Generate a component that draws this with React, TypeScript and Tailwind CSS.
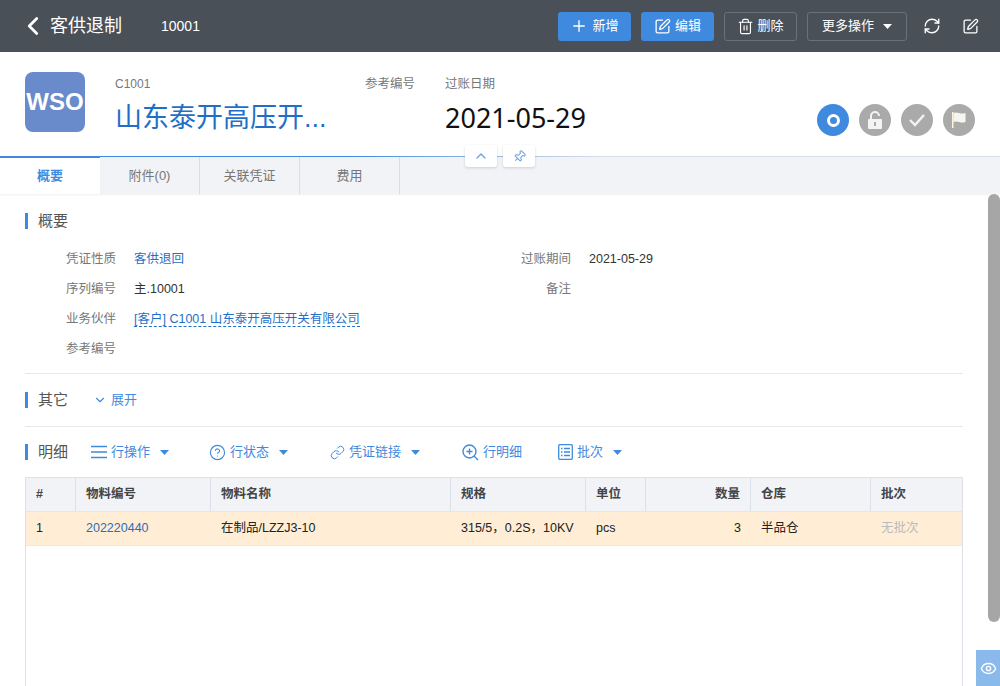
import { ChevronDown, ChevronLeft, ChevronUp, CircleHelp, Eye, Link, Pin, Plus, RefreshCw, Search, SquarePen, Trash2 } from "lucide-react";
import type { ReactNode } from "react";

const font = { fontFamily: '"Liberation Sans","Noto Sans CJK SC",sans-serif' };

function Caret({ className = "" }: { className?: string }) {
  return (
    <svg width="9" height="5" viewBox="0 0 9 5" className={className}>
      <path d="M0 0H9L4.5 5Z" fill="currentColor" />
    </svg>
  );
}

function Heading({ children }: { children: ReactNode }) {
  return <h2 className="border-l-[3px] border-[#3f8ade] pl-[10px] text-[15px] leading-[16px] text-[#555]">{children}</h2>;
}

function ToolAction({ icon, label, caret = true, className = "" }: { icon: ReactNode; label: string; caret?: boolean; className?: string }) {
  return (
    <span className={`flex items-center text-[13px] text-[#3f8ade] ${className}`}>
      {icon}
      <span className="ml-[4px]">{label}</span>
      {caret && <Caret className="ml-[10px]" />}
    </span>
  );
}

function Field({ label, children }: { label: string; children?: ReactNode }) {
  return (
    <div className="flex h-[30px] items-center text-[12.5px]">
      <span className="w-[91px] text-right text-[#777]">{label}</span>
      <span className="ml-[18px] text-[#333]">{children}</span>
    </div>
  );
}

export default function App() {
  return (
    <div className="relative h-[686px] w-[1000px] overflow-hidden bg-white" style={font}>
      <header className="flex h-[52px] items-center bg-[#4a5058] pl-[18px] text-white">
        <ChevronLeft size={30} strokeWidth={2.2} className="text-white" />
        <span className="ml-[2px] text-[18px]">客供退制</span>
        <span className="ml-[39px] text-[14px]">10001</span>
        <div className="ml-auto flex items-center pr-[21px] text-[13px]">
          <button className="flex h-[29px] w-[73px] items-center justify-center rounded-[3px] bg-[#3f8ade]">
            <Plus size={18} strokeWidth={1.8} /><span className="ml-[4px]">新增</span>
          </button>
          <button className="ml-[10px] flex h-[29px] w-[73px] items-center justify-center rounded-[3px] bg-[#3f8ade]">
            <SquarePen size={17} strokeWidth={1.8} /><span className="ml-[4px]">编辑</span>
          </button>
          <button className="ml-[10px] flex h-[29px] w-[73px] items-center justify-center rounded-[3px] border border-[#68717c]">
            <Trash2 size={17} strokeWidth={1.6} /><span className="ml-[3px]">删除</span>
          </button>
          <button className="ml-[10px] flex h-[29px] w-[100px] items-center justify-center rounded-[3px] border border-[#68717c]">
            <span>更多操作</span><Caret className="ml-[9px]" />
          </button>
          <RefreshCw size={18} strokeWidth={1.8} className="ml-[16px]" />
          <SquarePen size={17} strokeWidth={1.8} className="ml-[21px]" />
        </div>
      </header>

      <section className="flex h-[104px] bg-white pl-[25px] pt-[20px]">
        <div className="flex h-[60px] w-[60px] items-center justify-center rounded-[8px] bg-[#6a8bcb] text-[24px] font-bold text-white">WSO</div>
        <div className="ml-[30px] w-[250px]">
          <div className="text-[12px] leading-[24px] text-[#777]">C1001</div>
          <div className="mt-[2px] truncate text-[27px] leading-[40px] text-[#1f6fc9]">山东泰开高压开...</div>
        </div>
        <div className="text-[12.5px] leading-[24px] text-[#777]">参考编号</div>
        <div className="ml-[30px]">
          <div className="text-[12.5px] leading-[24px] text-[#777]">过账日期</div>
          <div className="mt-[2px] text-[27px] leading-[40px] text-[#111]" style={{ fontFamily: '"Noto Sans",sans-serif' }}>2021-05-29</div>
        </div>
        <div className="ml-auto flex gap-[10px] pr-[25px] pt-[32px]">
          <span className="flex h-[32px] w-[32px] items-center justify-center rounded-full bg-[#3f8ade]">
            <span className="h-[13px] w-[13px] rounded-full border-[3.5px] border-white" />
          </span>
          <span className="flex h-[32px] w-[32px] items-center justify-center rounded-full bg-[#aaa]">
            <svg width="16" height="19" viewBox="0 0 16 19"><path d="M4 8V5a4 4 0 0 1 8 0" fill="none" stroke="#f4f4f4" strokeWidth="2" /><rect x="1" y="8" width="14" height="10" rx="1" fill="#f4f4f4" /><rect x="7" y="11" width="2" height="4" fill="#aaa" /></svg>
          </span>
          <span className="flex h-[32px] w-[32px] items-center justify-center rounded-full bg-[#aaa]">
            <svg width="18" height="14" viewBox="0 0 18 14"><path d="M2 7l5 5L16 2" fill="none" stroke="#f4f4f4" strokeWidth="2.4" /></svg>
          </span>
          <span className="flex h-[32px] w-[32px] items-center justify-center rounded-full bg-[#aaa]">
            <svg width="16" height="18" viewBox="0 0 16 18"><path d="M1 1h1.500v16H1z" fill="#fdf3df" /><path d="M2.500 2c4-2 7 2 12 0v9c-5 2-8-2-12 0z" fill="#f8f5ee" /></svg>
          </span>
        </div>
      </section>

      <nav className="relative flex h-[38px] border-t border-[#d9dde8] bg-[#f2f3f7] text-[13px] text-[#777] shadow-[0_1px_2px_rgba(0,0,0,0.06)]">
        <span className="-mt-px flex w-[100px] items-center justify-center border-t-2 border-[#3f8ade] bg-white font-bold text-[#3f8ade]">概要</span>
        <span className="flex w-[100px] items-center justify-center border-r border-[#d9dde8]">附件(0)</span>
        <span className="flex w-[100px] items-center justify-center border-r border-[#d9dde8]">关联凭证</span>
        <span className="flex w-[100px] items-center justify-center border-r border-[#d9dde8]">费用</span>
        <span className="absolute left-[100px] top-[-1px] h-px w-[500px] bg-gradient-to-r from-[#3f8ade] via-[#3f8ade] to-transparent" />
        <span className="absolute left-[465px] top-[-12px] flex h-[22px] w-[32px] items-center justify-center rounded-[3px] bg-white shadow-[0_1px_3px_rgba(0,0,0,0.15)]">
          <ChevronUp size={16} className="text-[#6ba3e5]" />
        </span>
        <span className="absolute left-[503px] top-[-12px] flex h-[22px] w-[32px] items-center justify-center rounded-[3px] bg-white shadow-[0_1px_3px_rgba(0,0,0,0.15)]">
          <Pin size={13} className="rotate-45 text-[#6ba3e5]" />
        </span>
      </nav>

      <main className="px-[25px] pr-[37px] pt-[19px]">
        <Heading>概要</Heading>
        <div className="mt-[15px] grid grid-cols-[455px_1fr] border-b border-[#e8e8e8] pb-[9px]">
          <div>
            <Field label="凭证性质"><span className="text-[#1f6fc9]">客供退回</span></Field>
            <Field label="序列编号">主.10001</Field>
            <Field label="业务伙伴"><span className="border-b border-dashed border-[#1f6fc9] text-[#1f6fc9]">[客户] C1001 山东泰开高压开关有限公司</span></Field>
            <Field label="参考编号" />
          </div>
          <div>
            <Field label="过账期间">2021-05-29</Field>
            <Field label="备注" />
          </div>
        </div>

        <div className="flex h-[53px] items-center border-b border-[#e8e8e8]">
          <Heading>其它</Heading>
          <span className="ml-[25px] flex items-center text-[13px] text-[#3f8ade]"><ChevronDown size={14} /><span className="ml-[4px]">展开</span></span>
        </div>

        <div className="flex h-[50px] items-center">
          <Heading>明细</Heading>
          <ToolAction className="ml-[23px]" icon={<svg width="16" height="14" viewBox="0 0 16 14"><path d="M0 1.500h16M0 7h16M0 12.500h16" stroke="currentColor" strokeWidth="1.300" /></svg>} label="行操作" />
          <ToolAction className="ml-[40px]" icon={<CircleHelp size={17} strokeWidth={1.6} />} label="行状态" />
          <ToolAction className="ml-[42px]" icon={<Link size={15} strokeWidth={1.6} />} label="凭证链接" />
          <ToolAction className="ml-[38px]" icon={<Search size={0} className="hidden" />} label="" caret={false} />
          <ToolAction icon={<svg width="17" height="17" viewBox="0 0 17 17" fill="none" stroke="currentColor" strokeWidth="1.400"><circle cx="7.500" cy="7.500" r="6.500" /><path d="M12 12l4 4M7.500 4.500v6M4.500 7.500h6" /></svg>} label="行明细" caret={false} />
          <ToolAction className="ml-[36px]" icon={<svg width="15" height="16" viewBox="0 0 15 16" fill="none" stroke="currentColor" strokeWidth="1.300"><rect x=".7" y=".7" width="13.600" height="14.600" rx="1" /><path d="M3 4.500h1.500M6 4.500h6M3 8h1.500M6 8h6M3 11.500h1.500M6 11.500h6" /></svg>} label="批次" />
        </div>

        <div className="h-[210px] border-x border-t border-[#dde0e8] text-[12.5px]">
          <div className="grid h-[33px] grid-cols-[50px_135px_240px_135px_60px_105px_120px_1fr] bg-[#f2f3f7] font-bold text-[#444] [&>span]:flex [&>span]:items-center [&>span]:border-r [&>span]:border-[#dde0e8] [&>span]:px-[10px] [&>span:last-child]:border-r-0">
            <span>#</span><span>物料编号</span><span>物料名称</span><span>规格</span><span>单位</span><span className="justify-end">数量</span><span>仓库</span><span>批次</span>
          </div>
          <div className="grid h-[35px] grid-cols-[50px_135px_240px_135px_60px_105px_120px_1fr] border-y border-[#f3e6cf] bg-[#ffeed5] text-[#222] [&>span]:flex [&>span]:items-center [&>span]:px-[10px]">
            <span>1</span><span className="text-[#2e6cb8]">202220440</span><span>在制品/LZZJ3-10</span><span><span className="truncate">315/5，0.2S，10KV</span></span><span>pcs</span><span className="justify-end">3</span><span>半品仓</span><span className="text-[#bbb]">无批次</span>
          </div>
        </div>
      </main>

      <div className="absolute right-0 top-[194px] h-[428px] w-[12px] rounded-t-[6px] rounded-b-[6px] bg-[#a6a6a6]" />
      <div className="absolute bottom-0 right-0 flex h-[36px] w-[24px] items-center justify-center bg-[#8ab9ec] text-white">
        <Eye size={17} strokeWidth={2} />
      </div>
    </div>
  );
}
